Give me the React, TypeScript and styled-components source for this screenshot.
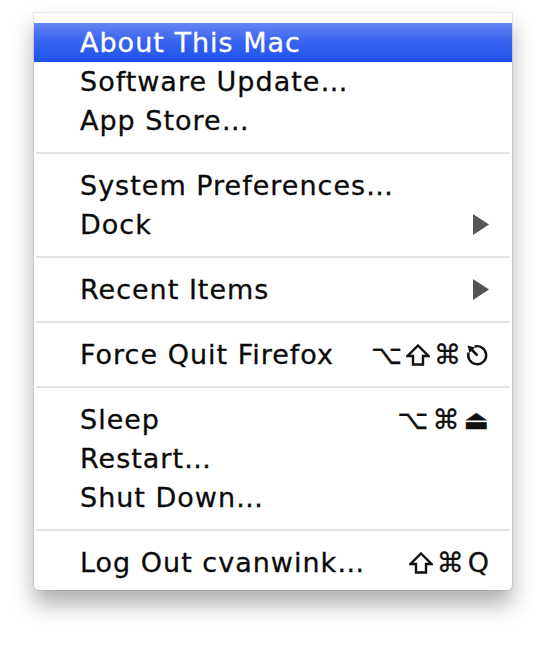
import React from "react";
import styled, { createGlobalStyle } from "styled-components";

const Global = createGlobalStyle`
  html, body { margin: 0; padding: 0; background: #ffffff; }
  body { font-family: "DejaVu Sans", "Liberation Sans", sans-serif; }
`;

const Page = styled.div`
  width: 546px;
  height: 648px;
  padding: 13px 0 0 34px;
  box-sizing: border-box;
`;

const Panel = styled.div`
  width: 478px;
  box-sizing: border-box;
  background: #ffffff;
  padding: 10px 0 8px;
  border-radius: 0 0 5px 5px;
  box-shadow: 0 0 0 1px rgba(0, 0, 0, 0.08), 0 14px 22px rgba(0, 0, 0, 0.32);
  display: flex;
  flex-direction: column;
`;

const Row = styled.div<{ $active?: boolean }>`
  height: 39px;
  display: flex;
  align-items: center;
  justify-content: space-between;
  padding: 0 23px 0 46px;
  font-size: 27px;
  letter-spacing: 1px;
  color: ${(p) => (p.$active ? "#ffffff" : "#0a0a0a")};
  background: ${(p) =>
    p.$active ? "linear-gradient(#6585f4, #3a65ef 45%, #1e52ec)" : "transparent"};
`;

const Label = styled.span`
  white-space: nowrap;
  -webkit-text-stroke: 0.3px currentColor;
`;

const Shortcut = styled.span`
  display: flex;
  align-items: center;
  gap: 4px;
  font-size: 27px;
  letter-spacing: 0;
  color: #111;
  white-space: nowrap;
  -webkit-text-stroke: 0.3px currentColor;
`;

const Key = styled.span`
  display: inline-block;
  line-height: 1;
`;

const Separator = styled.div`
  height: 26px;
  display: flex;
  align-items: center;
  padding: 0 2px;
  &::after {
    content: "";
    flex: 1;
    height: 2px;
    background: #e3e3e3;
  }
`;

const Arrow = () => (
  <svg width="17" height="21" viewBox="0 0 17 21">
    <polygon points="1,0 17,10.5 1,21" fill="#555" />
  </svg>
);

const ShiftIcon = () => (
  <svg width="24" height="22" viewBox="0 0 24 22">
    <path
      d="M12 1.5 L22.5 12 L17 12 L17 20.5 L7 20.5 L7 12 L1.5 12 Z"
      fill="none"
      stroke="#111"
      strokeWidth="2.4"
      strokeLinejoin="miter"
    />
  </svg>
);

const EscIcon = () => (
  <svg width="24" height="24" viewBox="0 0 24 24">
    <path
      d="M3.6 9.5 A9 9 0 1 0 9.5 3.6"
      fill="none"
      stroke="#111"
      strokeWidth="2.4"
    />
    <path d="M12.5 12.5 L6 6" stroke="#111" strokeWidth="2.6" />
    <polygon points="2.5,2.5 10,4.5 4.5,10" fill="#111" />
  </svg>
);

export default function App() {
  return (
    <Page>
      <Global />
      <Panel>
        <Row $active>
          <Label>About This Mac</Label>
        </Row>
        <Row>
          <Label>Software Update…</Label>
        </Row>
        <Row>
          <Label>App Store…</Label>
        </Row>
        <Separator />
        <Row>
          <Label>System Preferences…</Label>
        </Row>
        <Row>
          <Label>Dock</Label>
          <Arrow />
        </Row>
        <Separator />
        <Row>
          <Label>Recent Items</Label>
          <Arrow />
        </Row>
        <Separator />
        <Row>
          <Label>Force Quit Firefox</Label>
          <Shortcut>
            <Key>⌥</Key>
            <ShiftIcon />
            <Key>⌘</Key>
            <EscIcon />
          </Shortcut>
        </Row>
        <Separator />
        <Row>
          <Label>Sleep</Label>
          <Shortcut>
            <Key>⌥</Key>
            <Key>⌘</Key>
            <Key>⏏</Key>
          </Shortcut>
        </Row>
        <Row>
          <Label>Restart…</Label>
        </Row>
        <Row>
          <Label>Shut Down…</Label>
        </Row>
        <Separator />
        <Row>
          <Label>Log Out cvanwink…</Label>
          <Shortcut>
            <ShiftIcon />
            <Key>⌘</Key>
            <Key>Q</Key>
          </Shortcut>
        </Row>
      </Panel>
    </Page>
  );
}
